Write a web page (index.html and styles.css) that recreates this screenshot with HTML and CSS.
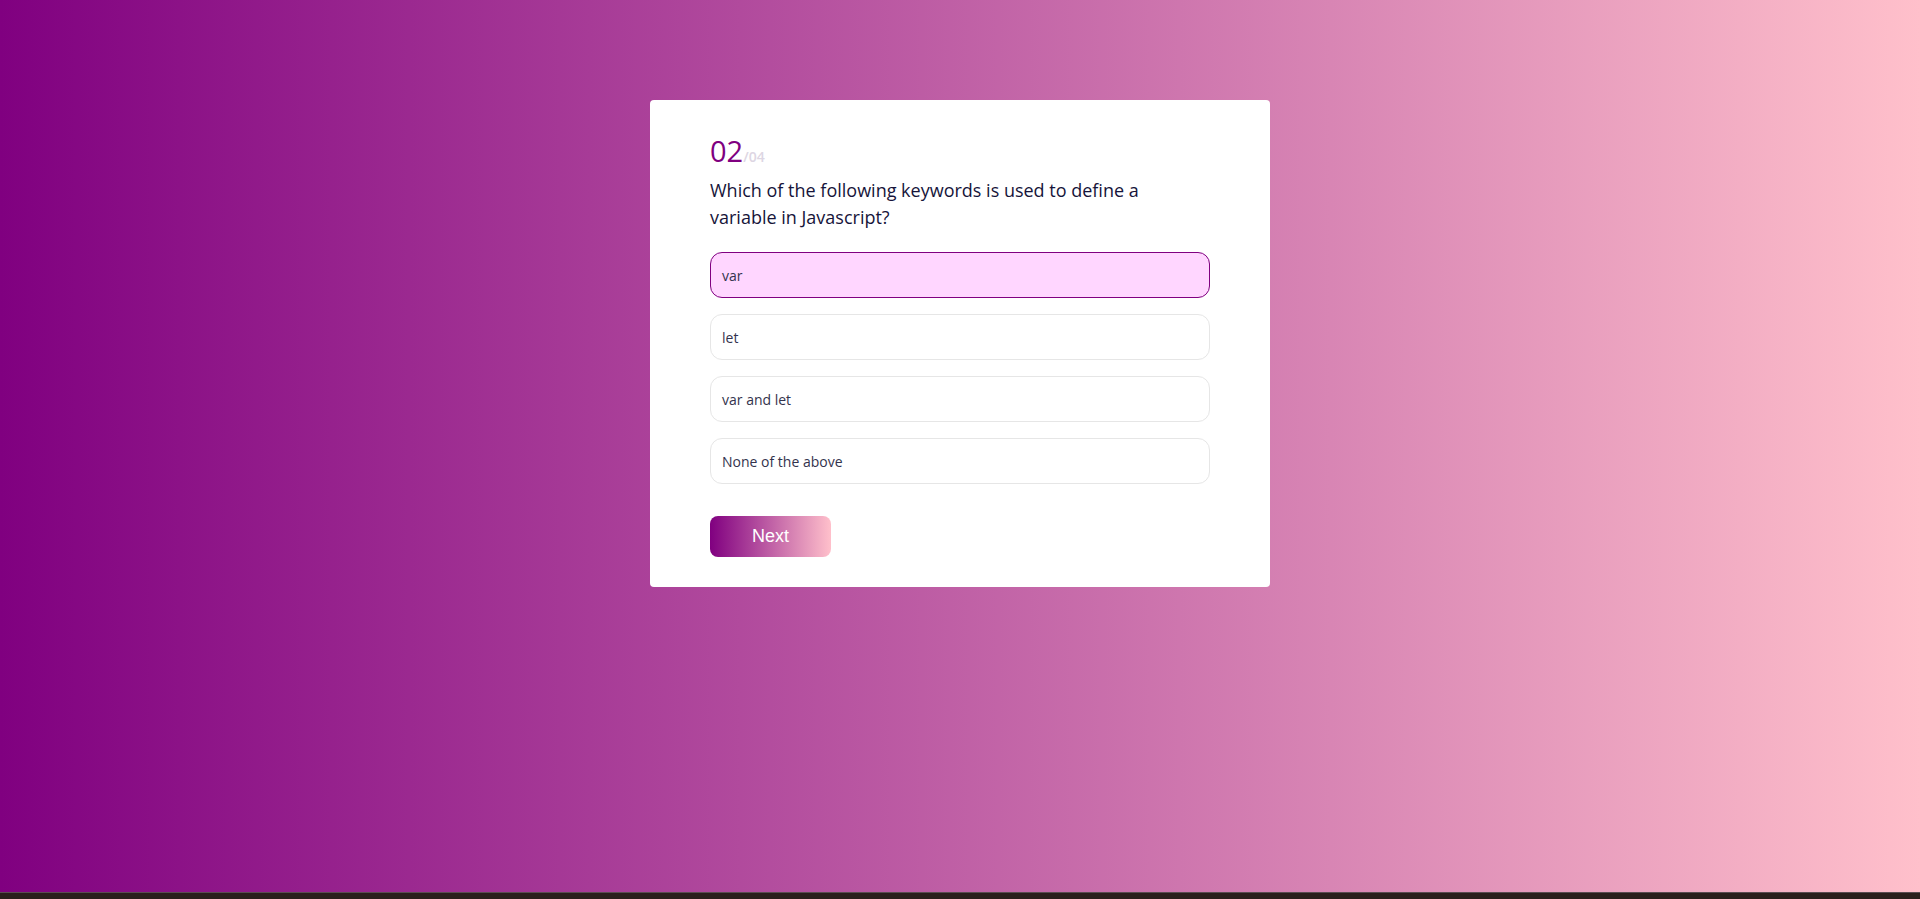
FILE: index.html
```html
<!DOCTYPE html>
<html lang="en">
<head>
<meta charset="utf-8">
<title>Quiz</title>
<link rel="stylesheet" href="styles.css">
</head>
<body>
<main class="page">
  <section class="card">
    <div class="counter"><span class="current">02</span><span class="total">/04</span></div>
    <h2 class="question">Which of the following keywords is used to define a variable in Javascript?</h2>
    <ul class="options">
      <li class="option selected">var</li>
      <li class="option">let</li>
      <li class="option">var and let</li>
      <li class="option">None of the above</li>
    </ul>
    <button class="next">Next</button>
  </section>
</main>
<div class="taskbar"></div>
</body>
</html>
```

FILE: styles.css
```css
* { box-sizing: border-box; }
html, body { margin: 0; padding: 0; height: 100%; }
body {
  font-family: "Open Sans", "Noto Sans", sans-serif;
  background: linear-gradient(to right, #800080, #ffc0cb);
  display: flex;
  flex-direction: column;
  overflow: hidden;
}
.page {
  flex: 1;
  display: flex;
  justify-content: center;
  align-items: flex-start;
  padding-top: 100px;
}
.card {
  width: 620px;
  background: #fff;
  border-radius: 4px;
  padding: 34px 60px 30px;
}
.counter {
  line-height: 34px;
}
.current {
  font-size: 29px;
  color: #800080;
}
.total {
  font-size: 14px;
  font-weight: 600;
  color: #ddd6e3;
}
.question {
  margin: 3px 0 0;
  width: 460px;
  font-size: 18px;
  font-weight: 500;
  line-height: 27px;
  color: #16143a;
}
.options {
  list-style: none;
  margin: 21px 0 0;
  padding: 0;
  display: flex;
  flex-direction: column;
  gap: 16px;
}
.option {
  height: 46px;
  border: 1px solid #e6e6e6;
  border-radius: 12px;
  padding: 0 11px;
  display: flex;
  align-items: center;
  font-size: 14px;
  color: #33334d;
}
.option.selected {
  background: #ffd6ff;
  border-color: #800080;
}
.next {
  margin-top: 32px;
  width: 121px;
  height: 41px;
  border: none;
  border-radius: 8px;
  background: linear-gradient(to right, #800080, #ffc0cb);
  color: #fff;
  font-family: "Liberation Sans", Arial, sans-serif;
  font-size: 18px;
  cursor: pointer;
}
.taskbar {
  height: 7px;
  background: #2a1f1c;
  border-top: 1px solid #5a4d52;
}
```
